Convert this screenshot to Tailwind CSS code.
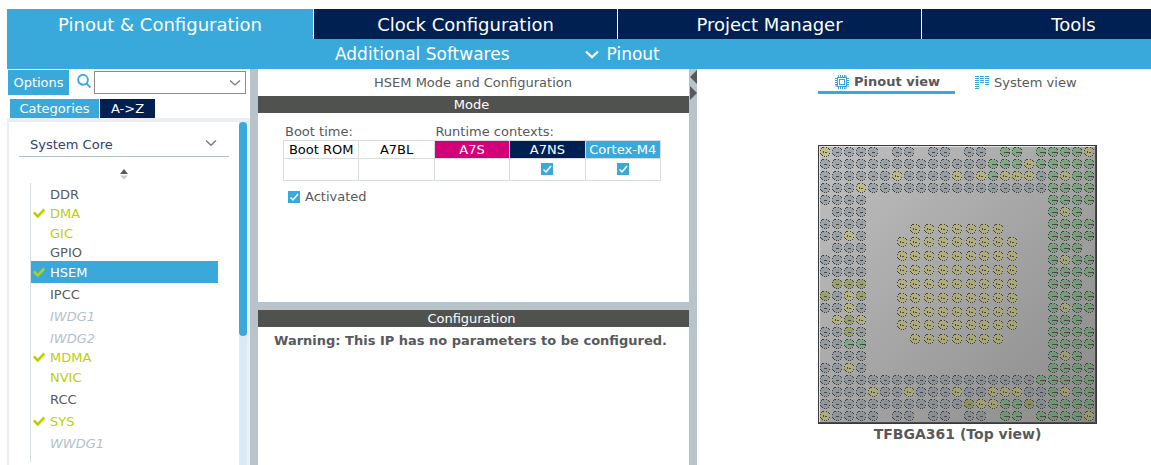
<!DOCTYPE html>
<html lang="en">
<head>
<meta charset="utf-8">
<title>Pinout &amp; Configuration</title>
<script src="https://cdn.jsdelivr.net/npm/@tailwindcss/browser@4"></script>
</head>
<body class="bg-white font-['DejaVu_Sans',sans-serif] text-[13px] leading-4 text-[#58595b]">
<div class="flex h-screen flex-col overflow-hidden pt-[9px] pl-[7px]">

  <nav class="flex h-[30px] shrink-0 gap-px text-[18px] leading-[31px] text-white" aria-label="Main">
    <button class="w-[306px] shrink-0 bg-[#39a9dc]">Pinout &amp; Configuration</button>
    <button class="w-[303px] shrink-0 bg-[#002052]">Clock Configuration</button>
    <button class="w-[303px] shrink-0 bg-[#002052]">Project Manager</button>
    <button class="w-[303px] shrink-0 grow bg-[#002052]">Tools</button>
  </nav>

  <div class="flex h-[30px] shrink-0 items-center gap-[75px] bg-[#39a9dc] pl-[328px] text-[17px] text-white">
    <button>Additional Softwares</button>
    <button class="flex items-center gap-2">
      <svg class="h-[14px] w-[14px]" viewBox="0 0 14 14" fill="none" stroke="currentColor" stroke-width="2.200"><path d="M1 4.500 7 10.300 13 4.500"/></svg>
      Pinout
    </button>
  </div>

  <div class="flex min-h-0 flex-1">

    <aside class="flex w-[243px] shrink-0 flex-col pt-px">
      <div class="flex h-[25px] items-center pr-1 pl-px">
        <button class="h-[25px] w-[61px] bg-[#39a9dc] text-white">Options</button>
        <svg class="mr-[3px] mb-1 ml-2 h-[14px] w-[14px]" viewBox="0 0 14 14" fill="none" stroke="#39a9dc" stroke-width="1.900"><circle cx="6" cy="5.800" r="4.900"/><path d="M9.400 9.400 13.500 13.500"/></svg>
        <div class="relative h-[23px] flex-1">
          <select class="h-full w-full appearance-none border border-[#8a8c8e] bg-white" aria-label="Search"><option></option></select>
          <svg class="pointer-events-none absolute top-2 right-[5px] h-2 w-3" viewBox="0 0 12 8" fill="none" stroke="#77797b" stroke-width="1.300"><path d="M1 1.500 6 6 11 1.500"/></svg>
        </div>
      </div>
      <div class="mt-1 flex h-[19px] gap-px pl-[3px] leading-[19px] text-white">
        <button class="w-[89px] bg-[#39a9dc]">Categories</button>
        <button class="w-[55px] bg-[#002052]">A-&gt;Z</button>
      </div>
      <div class="flex min-h-0 flex-1 border-t-4 border-r-[3px] border-l-2 border-[#ebeff2]">
        <div class="min-w-0 flex-1 pr-[10px] pl-[10px]">
          <button class="flex h-[35px] w-full items-end justify-between border-b border-[#b4c1c8] pr-3 pb-[3px] pl-[11px]">
            <span class="text-[#33406b]">System Core</span>
            <svg class="mb-[6px] h-2 w-3" viewBox="0 0 12 8" fill="none" stroke="#77797b" stroke-width="1.300"><path d="M1 1.500 6 6.300 11 1.500"/></svg>
          </button>
          <button class="mx-auto mt-3 block w-[10px]" aria-label="Sort">
            <svg class="h-[11px] w-[10px]" viewBox="0 0 10 11"><path d="M5 0 9 5H1z" fill="#58595b"/><path d="M1 6.500H9L5 10.500z" fill="#cccccc"/></svg>
          </button>
          <ul id="ips" class="mt-[3px] ml-[11px] border-l border-[#d5dde0] pr-[11px] pb-2"></ul>
        </div>
        <div class="w-2 bg-[#d9e9f6]"><div class="h-[214px] rounded-full bg-[#39a9dc]"></div></div>
      </div>
    </aside>

    <div class="w-2 shrink-0 bg-[#b8c4ca]"></div>

    <main class="flex w-[431px] shrink-0 flex-col">
      <h1 class="h-[27px] pr-px text-center leading-[27px]">HSEM Mode and Configuration</h1>
      <section class="h-[206px] shrink-0">
        <h2 class="h-[17px] bg-[#505250] pr-1 text-center leading-[18px] text-white">Mode</h2>
        <div class="pt-[11px] pr-7 pl-[25px]">
          <div class="grid h-4 grid-cols-5 pl-[2px]">
            <span class="col-span-2">Boot time:</span><span class="col-span-3">Runtime contexts:</span>
          </div>
          <table class="w-full table-fixed border-collapse text-center text-black">
            <thead><tr class="h-[18px]">
              <th class="border border-[#d8dee0] p-0 font-normal">Boot ROM</th>
              <th class="border border-[#d8dee0] p-0 font-normal">A7BL</th>
              <th class="border border-[#d8dee0] bg-[#d4007a] p-0 font-normal text-white">A7S</th>
              <th class="border border-[#d8dee0] bg-[#002052] p-0 font-normal text-white">A7NS</th>
              <th class="border border-[#d8dee0] bg-[#39a9dc] p-0 font-normal text-white">Cortex-M4</th>
            </tr></thead>
            <tbody><tr class="h-[22px]">
              <td class="border border-[#d8dee0] p-0"></td>
              <td class="border border-[#d8dee0] p-0"></td>
              <td class="border border-[#d8dee0] p-0"></td>
              <td class="border border-[#d8dee0] p-0"><span class="relative mx-auto mb-px block h-3 w-3"><input type="checkbox" checked aria-label="A7NS" class="block h-3 w-3 appearance-none bg-[#39a9dc]"><svg class="pointer-events-none absolute inset-0" viewBox="0 0 12 12" fill="none" stroke="#fff" stroke-width="1.500"><path d="M2.500 6.500 5 9 10 3"/></svg></span></td>
              <td class="border border-[#d8dee0] p-0"><span class="relative mx-auto mb-px block h-3 w-3"><input type="checkbox" checked aria-label="Cortex-M4" class="block h-3 w-3 appearance-none bg-[#39a9dc]"><svg class="pointer-events-none absolute inset-0" viewBox="0 0 12 12" fill="none" stroke="#fff" stroke-width="1.500"><path d="M2.500 6.500 5 9 10 3"/></svg></span></td>
            </tr></tbody>
          </table>
          <label class="mt-2 ml-[5px] flex items-center gap-[5px]"><span class="relative block h-3 w-3"><input type="checkbox" checked class="block h-3 w-3 appearance-none bg-[#39a9dc]"><svg class="pointer-events-none absolute inset-0" viewBox="0 0 12 12" fill="none" stroke="#fff" stroke-width="1.500"><path d="M2.500 6.500 5 9 10 3"/></svg></span>Activated</label>
        </div>
      </section>
      <div class="h-2 shrink-0 bg-[#b8c4ca]"></div>
      <section>
        <h2 class="h-[17px] bg-[#505250] pr-1 text-center leading-[18px] text-white">Configuration</h2>
        <p class="mt-[6px] pl-4 font-bold whitespace-nowrap">Warning: This IP has no parameters to be configured.</p>
      </section>
    </main>

    <div class="w-2 shrink-0 bg-[#b8c4ca]">
      <svg class="h-8 w-2" viewBox="0 0 8 32" fill="#58595b"><path d="M8 1V15L1 8z"/><path d="M1 17V31L8 24z"/></svg>
    </div>

    <section class="flex min-w-[521px] flex-1 shrink-0 flex-col items-center">
      <div class="flex h-[25px] w-[279px] gap-5" role="tablist">
        <button role="tab" class="flex h-[25px] w-[137px] items-center justify-center gap-[5px] border-b-[3px] border-[#39a9dc] pt-1 pl-[2px] font-bold">
          <svg class="h-[14px] w-[14px]" viewBox="0 0 14 14" fill="none" stroke="#39a9dc"><rect x="2.500" y="2.500" width="9" height="9"/><rect x="4.500" y="4.500" width="5" height="5"/><path d="M3.500 0V2M5.500 0V2M7.500 0V2M9.500 0V2M11 0V2M3.500 12V14M5.500 12V14M7.500 12V14M9.500 12V14M11 12V14M0 3.500H2M0 5.500H2M0 7.500H2M0 9.500H2M0 11H2M12 3.500H14M12 5.500H14M12 7.500H14M12 9.500H14M12 11H14"/></svg>
          Pinout view
        </button>
        <button role="tab" class="flex h-[25px] items-center gap-[5px] pt-[2px]">
          <svg class="h-[14px] w-[14px]" viewBox="0 0 14 14" stroke="#39a9dc" fill="none" shape-rendering="crispEdges"><path d="M0 .5H4M0 2.500H4M0 4.500H4M0 6.500H4M0 8.500H4M0 10.500H4M0 12.500H4M5 .5H9M5 2.500H9M5 4.500H9M5 6.500H9M10 .5H14M10 2.500H14M10 4.500H14M10 6.500H14M10 8.500H14"/></svg>
          System view
        </button>
      </div>
      <svg id="chip" class="mt-[51px] h-[279px] w-[279px] shrink-0" viewBox="0 0 279 279" role="img" aria-label="TFBGA361 package">
        <defs>
          <linearGradient id="body" x1="0" y1="0" x2="1" y2="1"><stop offset="0" stop-color="#c0c0c0"/><stop offset="1" stop-color="#8a8a8a"/></linearGradient>
          <path id="rim" d="M-3 -4.500h2M1 -4.500h1M-4 -3.500h1M3 -3.500h1M4 -2.500h1M-5 -1.500h1M-5 1.500h1M4 1.500h1M-4 2.500h1M3 3.500h1M-3 3.500h1M-1 4.500h1M1 4.500h1" stroke="#404040" shape-rendering="crispEdges"/>
        </defs>
        <rect width="279" height="279" fill="#3a3a3a"/>
        <rect x="1" y="1" width="277" height="277" fill="url(#body)"/>
        <path d="M1.500 278V1.500H278" fill="none" stroke="#e4e2e4"/>
        <path d="M277.500 1V277.500H1" fill="none" stroke="#4a4a4a"/>
      </svg>
      <p class="mt-[2px] text-[14px] font-bold">TFBGA361 (Top view)</p>
    </section>
  </div>
</div>

<script>
  const tick = '<svg class="absolute left-[2px] h-3 w-3" viewBox="0 0 12 12" fill="none" stroke="#bccf00" stroke-width="2.600"><path d="M.8 4.500 4.800 8.500 11.300 1.500"/></svg>';
  const item = {
    plain: 'relative flex h-[22px] w-full items-center pt-[2px] pl-[19px]',
    green: 'relative flex h-[22px] w-full items-center pt-[2px] pl-[19px] text-[#bccf00]',
    short: 'relative flex h-[17px] w-full items-center pl-[19px]',
    ticked: 'relative flex h-[17px] w-full items-center pl-[19px] text-[#bccf00]',
    active: 'relative flex h-[22px] w-full items-center bg-[#39a9dc] pt-[2px] pl-[19px] text-white',
    off: 'relative flex h-[22px] w-full items-center pt-[2px] pl-[19px] text-[#b4c1c8] italic'
  };
  const ips = [['DDR','plain'],['DMA','ticked',1],['GIC','green'],['GPIO','short'],['HSEM','active',1],['IPCC','plain'],['IWDG1','off'],['IWDG2','off'],['MDMA','ticked',1],['NVIC','green'],['RCC','plain'],['SYS','green',1],['WWDG1','off']];
  document.getElementById('ips').innerHTML = ips.map(([n, k, t]) => `<li><button class="${item[k]}">${t ? tick : ''}${n}</button></li>`).join('');

  // b unassigned, G I/O, Y power, O special; a dot is an empty position
  const gap = '...............';
  const rows = [
    'Ybbbb.bb.bb.bb.GG.GGGGY',
    'bbbbbbbbbbbbbbGGGYGGGGG',
    'bbbbbbYbbbbYbYGYYYbGYGG',
    'bbbYbbbbbbbbbbbbbbbGGGG',
    'bbbb'+gap+'GGGG', '.bbb'+gap+'GYG.', 'bbbb'+gap+'GGGG', 'bbYb'+gap+'GGGG',
    '.bbb'+gap+'GGG.', 'bbbb'+gap+'GYGG', 'bbbb'+gap+'GGGG', '.OOO'+gap+'GGG.',
    'ObYO'+gap+'GGGG', 'bbYb'+gap+'GYGG', '.YOY'+gap+'GGG.', 'bbOb'+gap+'GGGG',
    'bbGG'+gap+'GGGG', '.bbb'+gap+'GYG.', 'bbYb'+gap+'GGGG',
    'bbbbbbbbbbbbbbbbbbGGGGG',
    'bbbbYbbYbbbYbbYYYbbGYGG',
    'bbbbbbbbbbbbOYYGGObGGGG',
    'Ybbbb.bb.bb.bb.GG.GGGGY'
  ];
  const fill = { b: [152,159,164], G: [130,174,134], Y: [184,182,130], O: [156,164,106] };
  const ball = (x, y, k) => {
    const shade = 1.06 - (x + y) / 2400;
    const c = fill[k].map(v => Math.round(v * shade)).join(',');
    const mark = k === 'Y' ? `M${x-1.5} ${y-1}v2M${x} ${y+.5}h2` : k === 'G' ? `M${x-1} ${y+.5}h6` : `M${x-1} ${y+.5}h3`;
    return `<circle cx="${x}" cy="${y}" r="5" fill="rgb(${c})"/><use href="#rim" x="${x}" y="${y}"/><path d="${mark}" stroke="#484848" fill="none"/>`;
  };
  let out = '';
  rows.forEach((r, j) => [...r].forEach((k, i) => { if (k !== '.') out += ball(7 + 12 * i, 7 + 12 * j, k); }));
  const xs = [84,97,111,125,139,153,166,180,194], ys = [84,97,111,125,139,153,167,180,194];
  ys.forEach((y, j) => xs.forEach((x, i) => {
    if ((j === 0 || j === 8) && (i === 0 || i === 8)) return;
    out += ball(x, y, 'Y');
  }));
  document.getElementById('chip').insertAdjacentHTML('beforeend', out);
</script>
</body>
</html>
